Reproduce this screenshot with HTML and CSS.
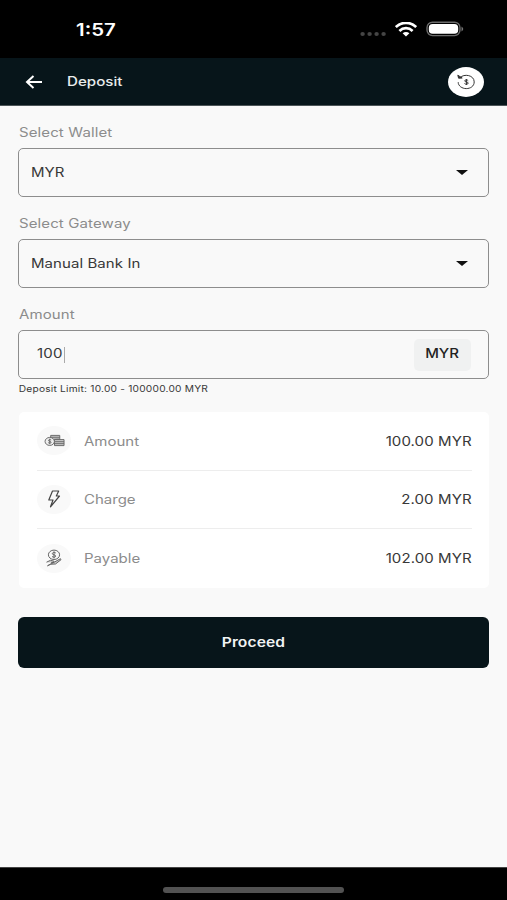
FILE: index.html
```html
<!DOCTYPE html>
<html lang="en">
<head>
<meta charset="utf-8">
<title>Deposit</title>
<link rel="stylesheet" href="styles.css">
</head>
<body>
<div class="status">
  <span class="time wide">1:57</span>
  <div class="status-icons">
    <svg width="26" height="6" viewBox="0 0 26 6" fill="#454545"><ellipse cx="2.6" cy="3" rx="2.2" ry="1.9"/><ellipse cx="9.6" cy="3" rx="2.2" ry="1.9"/><ellipse cx="16.6" cy="3" rx="2.2" ry="1.9"/><ellipse cx="23.6" cy="3" rx="2.2" ry="1.9"/></svg>
    <svg class="wifi" width="22" height="15" viewBox="0 0 22 15" fill="none" stroke="#fff" stroke-width="2.7"><path d="M.8 5.1C6.400-.5 15.600-.5 21.200 5.100"/><path d="M4.400 8.900C8.200 5.300 13.800 5.300 17.600 8.900"/><path d="M7.600 11.300C9.600 9.500 12.400 9.500 14.400 11.300L11 14.500Z" fill="#fff" stroke="none"/></svg>
    <svg class="battery" width="38" height="16" viewBox="0 0 38 16"><rect x="1" y="1.200" width="33" height="13.400" rx="5.500" fill="none" stroke="#6b6b6b" stroke-width="1.400"/><rect x="2.800" y="3" width="29.400" height="9.800" rx="3.800" fill="#fff"/><path d="M35.500 5.500Q39 8 35.500 10.500Z" fill="#777"/></svg>
  </div>
</div>
<header class="bar">
  <svg class="back" width="18" height="14" viewBox="0 0 18 14" fill="none" stroke="#fff" stroke-width="2"><path d="M17 7H2M8.500 1L2 7L8.500 13"/></svg>
  <h1 class="wide">Deposit</h1>
  <button class="history" aria-label="History">
    <svg width="20" height="16" viewBox="0 0 20 16" fill="none" stroke="#333" stroke-width="1"><path d="M4 3.700C8-.6 18.200 1 18.200 7.900C18.200 12.200 14.400 14.600 10.300 14.600C6 14.600 2.200 11.900 2.200 8.200"/><path d="M1.800 1.200L2.600 4.200L6.200 4Z" fill="#333"/><path d="M12.200 6.700C11.500 5.500 8.700 5.600 8.700 6.900C8.700 8.300 12.200 7.500 12.200 9.100C12.200 10.500 9.300 10.600 8.500 9.500M10.400 5V11"/></svg>
  </button>
</header>
<main>
  <label class="wide">Select Wallet</label>
  <div class="field"><span class="wide">MYR</span><i class="caret"></i></div>
  <label class="wide">Select Gateway</label>
  <div class="field"><span class="wide gateway">Manual Bank In</span><i class="caret"></i></div>
  <label class="wide">Amount</label>
  <div class="field amount"><div class="entry"><span class="wide">100</span></div><div class="unit"><span class="wide">MYR</span></div></div>
  <p class="limit wide">Deposit Limit: 10.00 - 100000.00 MYR</p>
  <section class="card">
    <div class="row">
      <div class="dot"><svg width="21" height="13" viewBox="0 0 22 14" preserveAspectRatio="none" fill="none" stroke="#666" stroke-width="1"><path d="M7 4V1.500H16.500V6M7 3.500H16.500M11 6V12.500H21V6ZM11 8.300H21M11 10.400H21M9.500 5.500H16" fill="#aaa" fill-opacity=".6"/><ellipse cx="6" cy="8" rx="4.900" ry="4.300" fill="#eee"/><path d="M7.500 6.500C6.500 5.700 4.700 6 4.700 7C4.700 8.200 7.400 7.600 7.400 9C7.400 10.200 5.200 10 4.400 9.300M6 5V11"/></svg></div>
      <span class="name wide">Amount</span><span class="value wide">100.00 MYR</span>
    </div>
    <div class="row">
      <div class="dot"><svg width="14" height="18" viewBox="0 0 14 18" fill="none" stroke="#444" stroke-width="1.200" stroke-linejoin="round"><path d="M5.500 1H11.700L9.300 6H12.500L3.500 16.800L6 10H1.800Z"/></svg></div>
      <span class="name wide">Charge</span><span class="value wide">2.00 MYR</span>
    </div>
    <div class="row">
      <div class="dot"><svg width="18" height="18" viewBox="0 0 18 18" fill="none" stroke="#666" stroke-width="1"><ellipse cx="9" cy="5.800" rx="5.600" ry="4.700"/><path d="M10.800 4C9.700 3.100 7.300 3.300 7.300 4.700C7.300 6.200 10.700 5.400 10.700 7.100C10.700 8.500 8 8.400 7 7.500M9 2.300V9.400"/><path d="M1.500 13.200L5.500 11.300L9 12.200L8.500 13.500H6.200M9 13.300L15.500 9.700L16 10.700L10.500 15L5.500 15.200L2.500 16.800Z" fill="#999" fill-opacity=".5"/></svg></div>
      <span class="name wide">Payable</span><span class="value wide">102.00 MYR</span>
    </div>
  </section>
  <button class="proceed"><span class="wide">Proceed</span></button>
</main>
<footer><i></i></footer>
</body>
</html>
```
FILE: styles.css
```css
* { box-sizing: border-box; }
body {
  margin: 0;
  height: 900px;
  display: flex;
  flex-direction: column;
  background: #f9f9f9;
  font-family: Inter, "Liberation Sans", sans-serif;
  font-size: 12.5px;
  color: #383838;
  overflow: hidden;
}
button { border: 0; padding: 0; font: inherit; }
svg { display: block; }
.wide { display: inline-block; transform: scaleX(1.2); transform-origin: left center; white-space: nowrap; }
.status {
  height: 58px;
  background: #000;
  display: flex;
  align-items: center;
  justify-content: space-between;
  padding: 0 43px 0 76px;
}
.time { color: #fff; font-size: 17px; font-weight: 600; line-height: 20px; padding-top: 2px; }
.status-icons { display: flex; align-items: center; }
.status-icons svg:first-child { margin-top: 9px; }
.wifi { margin-left: 9px; }
.battery { margin-left: 9px; }
.bar {
  height: 48px;
  background: #07151a;
  border-bottom: 1px solid #4c5558;
  display: flex;
  align-items: center;
  padding: 0 23px 0 25px;
}
h1 { margin: 0 auto 0 24px; color: #e9eced; font-size: 12.600px; font-weight: 500; }
.history { width: 36px; height: 30px; border-radius: 50%; background: #fff; display: flex; align-items: center; justify-content: center; }
main { flex: 1; padding: 18px 18px 0; display: flex; flex-direction: column; }
label { color: #8c8c8c; height: 18px; line-height: 18px; margin-bottom: 6px; align-self: flex-start; letter-spacing: .1px; padding-left: .8px; }
.field {
  height: 49px;
  margin-bottom: 18px;
  border: 1px solid #8d8d8d;
  border-radius: 5px;
  display: flex;
  align-items: center;
  justify-content: space-between;
  padding: 0 20px 0 12px;
}
.gateway { letter-spacing: .06px; }
.caret { border: 6px solid transparent; border-top: 5px solid #111; border-bottom: 0; }
.amount { margin-bottom: 3px; padding: 0 17px 0 18px; }
.entry { width: 28px; height: 16px; border-right: 1.500px solid #aaa; display: flex; align-items: center; }
.entry .wide { letter-spacing: .2px; margin-top: -2px; }
.unit { width: 57px; height: 32px; border-radius: 5px; background: #f0f1f1; display: flex; align-items: center; justify-content: center; font-weight: 500; color: #222; }
.unit .wide { margin-top: -2px; }
.unit .wide, .proceed .wide { transform-origin: center; }
.limit { margin: 0; font-size: 8.500px; letter-spacing: .17px; line-height: 14px; align-self: flex-start; padding-left: .6px; }
.card { margin: 16px 0 29px 1px; height: 176px; padding: 0 17px 0 18px; background: #fff; border-radius: 5px; }
.row { height: 58.500px; display: flex; align-items: center; border-bottom: 1px solid #ededed; }
.row:not(:last-child) .wide { padding-top: 1px; }
.row:last-child { border: 0; }
.dot { width: 34px; height: 29px; border-radius: 50%; background: #f9f9f9; display: flex; align-items: center; justify-content: center; }
.name { margin-left: 12.500px; color: #8c8c8c; }
.value { margin-left: auto; transform-origin: right center; letter-spacing: .08px; }
.proceed { height: 51px; border-radius: 6px; background: #07151a; color: #f2f4f4; font-size: 13px; font-weight: 600; letter-spacing: .1px; padding-bottom: 2px; }
footer { height: 33px; background: #000; border-top: 1px solid #444; display: flex; justify-content: center; align-items: flex-start; padding-top: 19px; }
footer i { width: 181px; height: 6px; border-radius: 3px; background: #525252; }
```
